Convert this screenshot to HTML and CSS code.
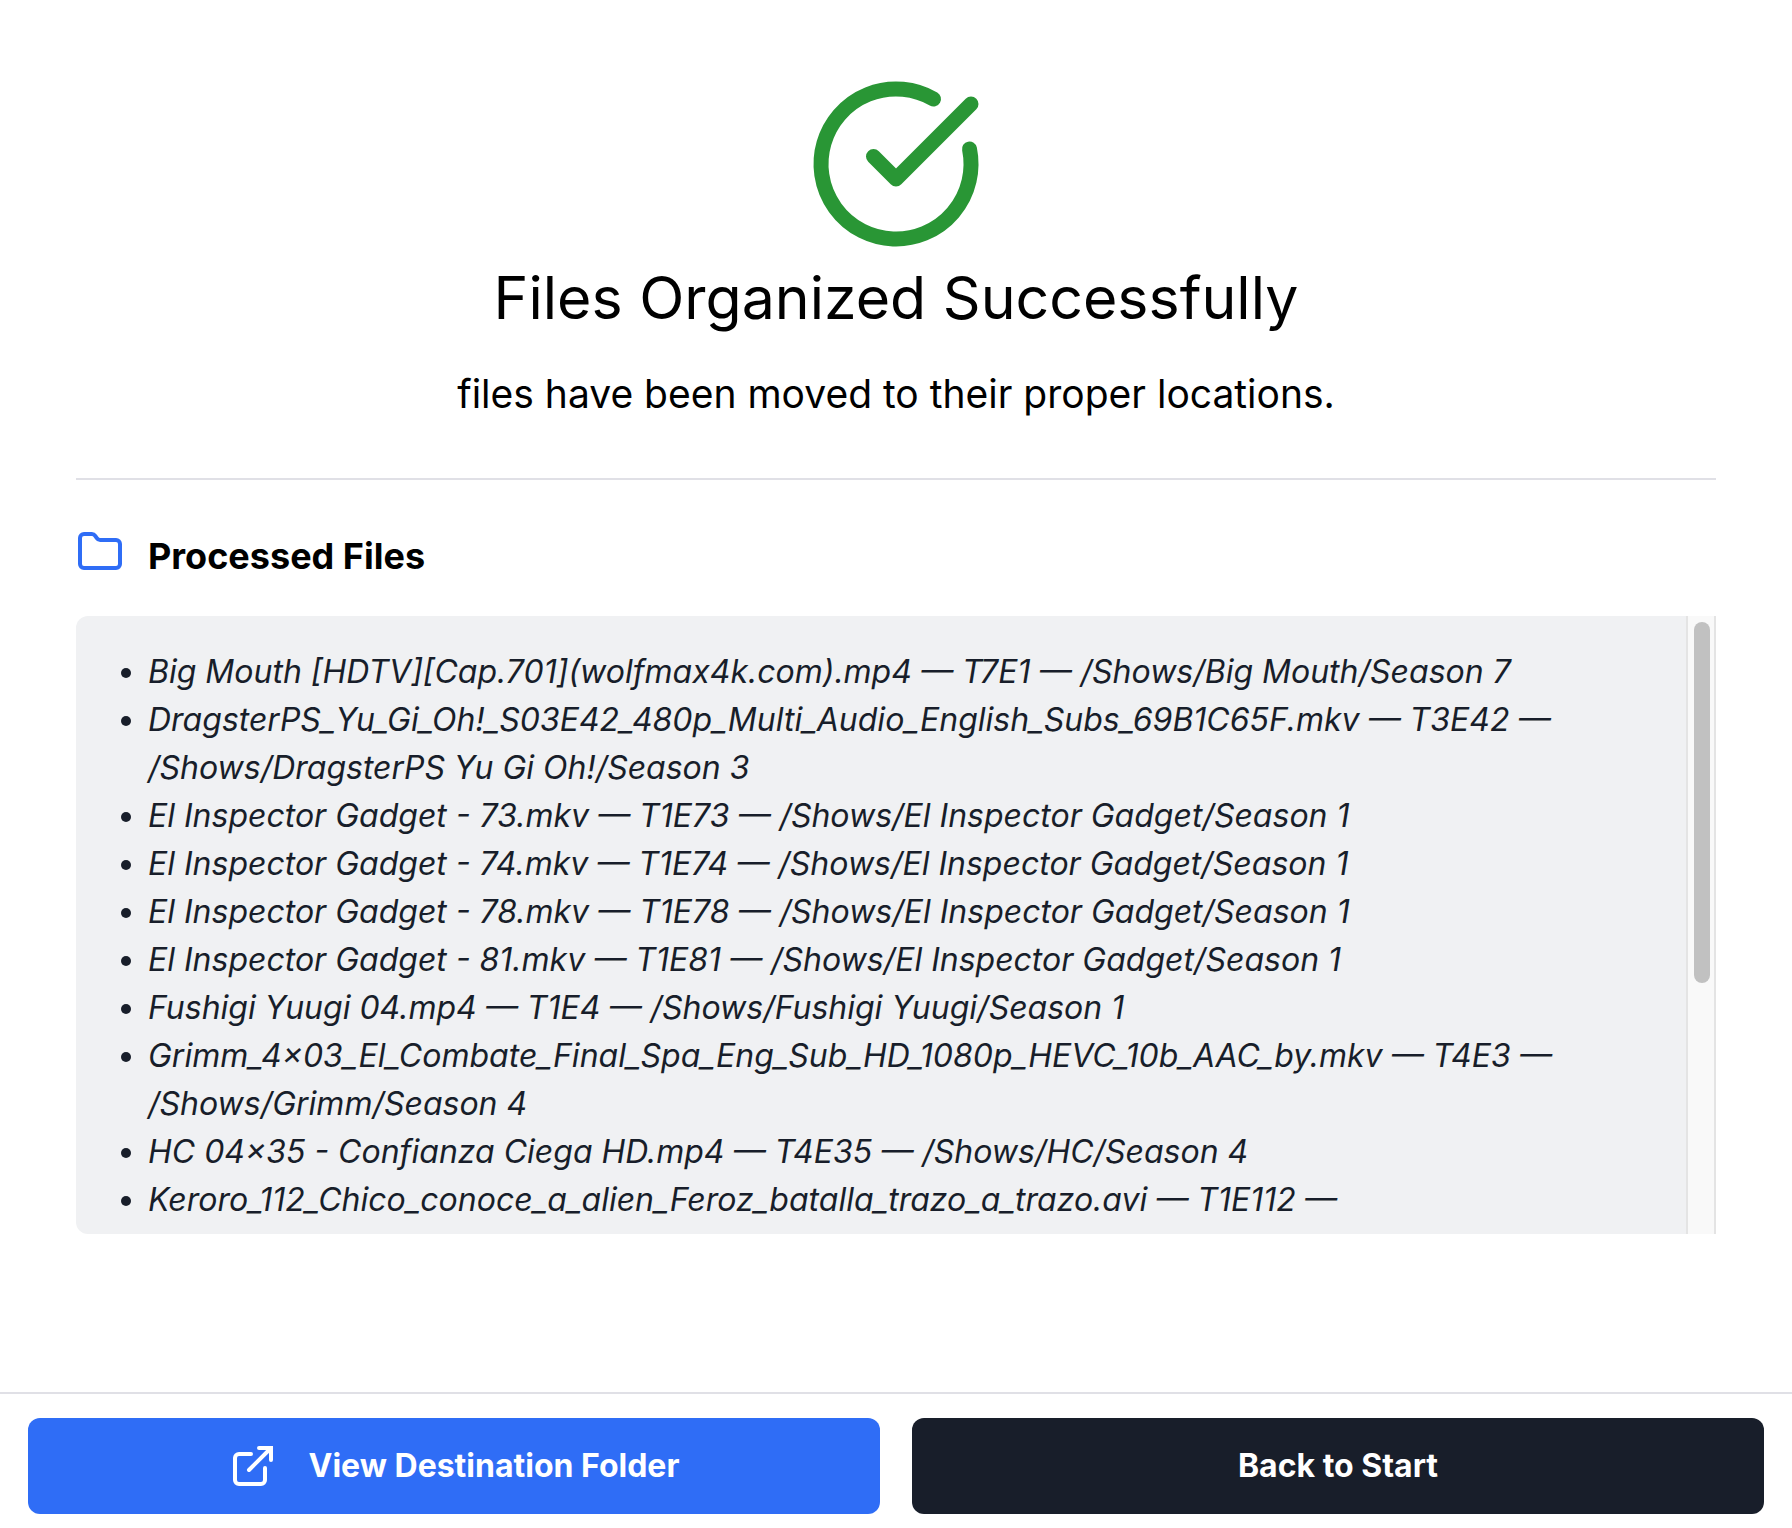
FILE: index.html
```html
<!DOCTYPE html>
<html lang="en">
<head>
<meta charset="utf-8">
<meta name="viewport" content="width=device-width, initial-scale=1">
<title>Files Organized Successfully</title>
<link rel="stylesheet" href="styles.css">
</head>
<body>
<main class="content">
  <header class="summary">
    <svg class="summary-icon" viewBox="0 0 24 24" aria-hidden="true"><path d="M21.801 10A10 10 0 1 1 17 3.335"/><path d="m9 11 3 3L22 4"/></svg>
    <h1 class="summary-title">Files Organized Successfully</h1>
    <p class="summary-text">files have been moved to their proper locations.</p>
  </header>
  <section class="processed">
    <div class="processed-head">
      <svg class="folder-icon" viewBox="0 0 24 24" aria-hidden="true"><path d="M20 20a2 2 0 0 0 2-2V8a2 2 0 0 0-2-2h-7.9a2 2 0 0 1-1.69-.9L9.6 3.9A2 2 0 0 0 7.93 3H4a2 2 0 0 0-2 2v13a2 2 0 0 0 2 2Z"/></svg>
      <h2 class="processed-title">Processed Files</h2>
    </div>
    <div class="file-box">
      <ul class="file-list" tabindex="0">
        <li>Big Mouth [HDTV][Cap.701](wolfmax4k.com).mp4 — T7E1 — /Shows/Big Mouth/Season 7</li>
        <li>DragsterPS_Yu_Gi_Oh!_S03E42_480p_Multi_Audio_English_Subs_69B1C65F.mkv — T3E42 — /Shows/DragsterPS Yu Gi Oh!/Season 3</li>
        <li>El Inspector Gadget - 73.mkv — T1E73 — /Shows/El Inspector Gadget/Season 1</li>
        <li>El Inspector Gadget - 74.mkv — T1E74 — /Shows/El Inspector Gadget/Season 1</li>
        <li>El Inspector Gadget - 78.mkv — T1E78 — /Shows/El Inspector Gadget/Season 1</li>
        <li>El Inspector Gadget - 81.mkv — T1E81 — /Shows/El Inspector Gadget/Season 1</li>
        <li>Fushigi Yuugi 04.mp4 — T1E4 — /Shows/Fushigi Yuugi/Season 1</li>
        <li>Grimm_4x03_El_Combate_Final_Spa_Eng_Sub_HD_1080p_HEVC_10b_AAC_by.mkv — T4E3 — /Shows/Grimm/Season 4</li>
        <li>HC 04x35 - Confianza Ciega HD.mp4 — T4E35 — /Shows/HC/Season 4</li>
        <li>Keroro_112_Chico_conoce_a_alien_Feroz_batalla_trazo_a_trazo.avi — T1E112 —</li>
      </ul>
      <div class="scroll-track" aria-hidden="true"><div class="scroll-thumb"></div></div>
    </div>
  </section>
</main>
<footer class="actions">
  <button class="button button-primary" type="button">
    <svg class="link-icon" viewBox="0 0 24 24" aria-hidden="true"><path d="M15 3h6v6"/><path d="M10 14 21 3"/><path d="M18 13v6a2 2 0 0 1-2 2H5a2 2 0 0 1-2-2V8a2 2 0 0 1 2-2h6"/></svg>
    View Destination Folder
  </button>
  <button class="button button-dark" type="button">Back to Start</button>
</footer>
</body>
</html>
```
FILE: styles.css
```css
* {
  box-sizing: border-box;
  margin: 0;
}

body {
  display: flex;
  flex-direction: column;
  min-height: 100vh;
  background: #fff;
  color: #000;
  font-family: Inter, "Liberation Sans", sans-serif;
}

svg {
  flex: none;
  fill: none;
  stroke: currentColor;
  stroke-width: 2;
  stroke-linecap: round;
  stroke-linejoin: round;
}

.content {
  flex: 1;
  padding: 74px 76px 0;
}

.summary {
  display: flex;
  flex-direction: column;
  align-items: center;
  padding-bottom: 56px;
  border-bottom: 2px solid #e0e0e6;
  text-align: center;
}

.summary-icon {
  width: 180px;
  height: 180px;
  color: #299635;
}

.summary-title {
  margin-top: 8px;
  font-size: 59px;
  font-weight: 400;
  line-height: 72px;
}

.summary-text {
  margin-top: 32px;
  font-size: 39px;
  line-height: 56px;
}

.processed {
  padding-top: 48px;
}

.processed-head {
  display: flex;
  align-items: flex-start;
  gap: 24px;
}

.folder-icon {
  width: 48px;
  height: 48px;
  color: #2f6df6;
}

.processed-title {
  font-size: 36px;
  font-weight: 700;
  line-height: 56px;
}

.file-box {
  display: flex;
  height: 618px;
  margin-top: 32px;
  border-radius: 12px 0 0 12px;
  background: #f0f1f3;
  color: #181e2a;
  overflow: hidden;
}

.file-list {
  flex: 1;
  padding: 32px 32px 32px 72px;
  font-size: 32px;
  font-style: italic;
  line-height: 48px;
  overflow-y: auto;
  scrollbar-width: none;
}

.scroll-track {
  width: 30px;
  padding: 6px 4px 6px 6px;
  border: solid #e4e4e4;
  border-width: 0 2px;
  background: #f9f9f9;
}

.scroll-thumb {
  height: 361px;
  border-radius: 8px;
  background: #c1c1c1;
}

.actions {
  display: grid;
  grid-template-columns: 1fr 1fr;
  gap: 32px;
  padding: 24px 28px 14px;
  border-top: 2px solid #e0e0e6;
}

.button {
  display: flex;
  align-items: center;
  justify-content: center;
  gap: 32px;
  height: 96px;
  border: 0;
  border-radius: 12px;
  color: #fff;
  font: 700 32px/48px Inter, "Liberation Sans", sans-serif;
  cursor: pointer;
}

.button-primary {
  background: #2f6df6;
}

.button-dark {
  background: #181e2a;
}

.link-icon {
  width: 48px;
  height: 48px;
  stroke-linejoin: miter;
}
```
